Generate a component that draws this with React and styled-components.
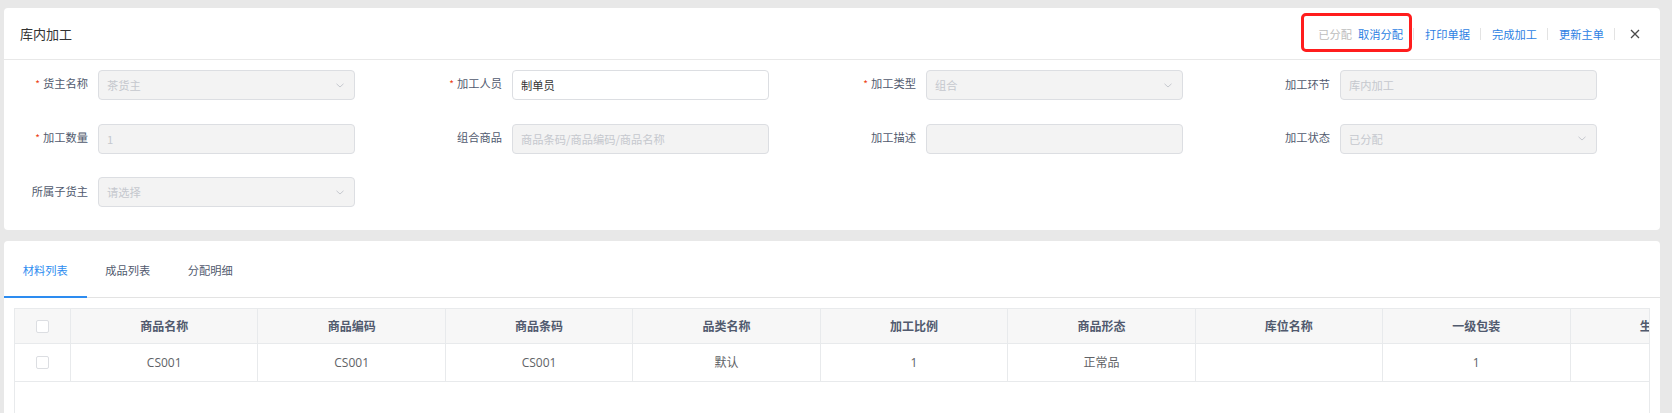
import React from "react";
import styled, { createGlobalStyle } from "styled-components";

const GlobalStyle = createGlobalStyle`
  html, body { margin: 0; padding: 0; background: #e8e8e8; }
  body { font-family: "Open Sans", "Noto Sans CJK SC", sans-serif; }
  * { box-sizing: border-box; }
`;

const Page = styled.div`
  height: 413px;
  overflow: hidden;
  padding: 8px 12px 0 4px;
  font-family: "Noto Sans CJK SC", "Open Sans", sans-serif;
`;

const Panel = styled.section`
  background: #fff;
  border-radius: 4px;
  margin-bottom: ${(p) => p.$gap || 0}px;
`;

const Header = styled.header`
  height: 52px;
  border-bottom: 1px solid #e8e8e8;
  display: flex;
  align-items: center;
  justify-content: space-between;
  padding: 0 20px 0 16px;
`;

const Title = styled.h1`
  margin: 0;
  font-size: 13px;
  font-weight: 400;
  color: #333;
  line-height: 18px;
`;

const Actions = styled.div`
  display: flex;
  align-items: center;
  padding-top: 1px;
`;

const Highlighted = styled.div`
  position: relative;
  display: flex;
  gap: 6px;
`;

const RedBox = styled.span`
  position: absolute;
  top: -13px;
  bottom: -10px;
  left: -17px;
  right: -9px;
  border: 3px solid #ff1d1d;
  border-radius: 5px;
  pointer-events: none;
`;

const ActionText = styled.span`
  font-size: 11.25px;
  line-height: 16px;
  color: ${(p) => (p.$muted ? "#bdbdbd" : "#2d7fe3")};
  cursor: ${(p) => (p.$muted ? "default" : "pointer")};
  white-space: nowrap;
`;

const Sep = styled.span`
  width: 1px;
  height: 12px;
  background: #e3e3e3;
  margin: 0 11px 0 10px;
`;

const CloseBtn = styled.span`
  display: flex;
  margin-left: 4px;
  cursor: pointer;
`;

const Form = styled.div`
  display: grid;
  grid-template-columns: repeat(4, 1fr);
  row-gap: 23.5px;
  padding: 10px 0 22.5px;
`;

const Field = styled.div`
  display: grid;
  grid-template-columns: 84px 257px;
  column-gap: 10px;
  align-items: center;
`;

const Label = styled.label`
  text-align: right;
  font-size: 11.25px;
  line-height: 16px;
  color: #515a6e;
  margin-top: -3px;
  white-space: nowrap;
`;

const Star = styled.span`
  color: #ed4014;
  margin-right: 3px;
  font-size: 10px;
`;

const InputBox = styled.div`
  height: 30px;
  border: 1px solid #dcdee2;
  border-radius: 4px;
  background: ${(p) => (p.$disabled ? "#f3f3f3" : "#fff")};
  color: ${(p) => (p.$disabled ? "#c5c8ce" : "#333")};
  padding: 0 10px 0 8px;
  display: flex;
  align-items: center;
  justify-content: space-between;
  font-size: 11.25px;
  white-space: nowrap;
`;

const TabBar = styled.nav`
  display: flex;
  height: 57px;
  border-bottom: 1px solid #e3e3e3;
`;

const Tab = styled.div`
  display: flex;
  align-items: center;
  padding: 3px 18.75px 0;
  height: 57px;
  margin-bottom: -1px;
  font-size: 11.25px;
  color: ${(p) => (p.$active ? "#2d8cf0" : "#515a6e")};
  border-bottom: 2px solid ${(p) => (p.$active ? "#2d8cf0" : "transparent")};
  cursor: pointer;
`;

const TableWrap = styled.div`
  margin: 10px 10px 0;
  height: 140px;
  border: 1px solid #e8eaec;
  overflow: hidden;
`;

const Table = styled.table`
  border-collapse: separate;
  border-spacing: 0;
  table-layout: fixed;
  width: 1743px;
  font-size: 12px;
`;

const Th = styled.th`
  height: 35px;
  background: #f7f7f7;
  color: #515a6e;
  font-weight: 700;
  text-align: center;
  border-right: 1px solid #e8eaec;
  border-bottom: 1px solid #e8eaec;
  padding: 0;
  white-space: nowrap;
  overflow: hidden;
`;

const Td = styled.td`
  height: 38px;
  color: #606266;
  text-align: center;
  border-right: 1px solid #e8eaec;
  border-bottom: 1px solid #e8eaec;
  padding: 0;
  font-family: "Open Sans", "Noto Sans CJK SC", sans-serif;
  white-space: nowrap;
`;

const Checkbox = styled.span`
  display: inline-block;
  width: 13px;
  height: 13px;
  border: 1px solid #dcdee2;
  border-radius: 2px;
  background: #fff;
  vertical-align: middle;
  margin-top: -2px;
`;

const Chevron = () => (
  <svg width="8" height="5" viewBox="0 0 8 5" fill="none">
    <path d="M0.5 0.8L4 4L7.5 0.8" stroke="#c5c8ce" strokeWidth="1" />
  </svg>
);

const fields = [
  { label: "货主名称", req: true, value: "茶货主", disabled: true, select: true },
  { label: "加工人员", req: true, value: "制单员" },
  { label: "加工类型", req: true, value: "组合", disabled: true, select: true },
  { label: "加工环节", value: "库内加工", disabled: true },
  { label: "加工数量", req: true, value: "1", disabled: true },
  { label: "组合商品", value: "商品条码/商品编码/商品名称", disabled: true },
  { label: "加工描述", value: "", disabled: true },
  { label: "加工状态", value: "已分配", disabled: true, select: true },
  { label: "所属子货主", value: "请选择", disabled: true, select: true },
];

const columns = ["商品名称", "商品编码", "商品条码", "品类名称", "加工比例", "商品形态", "库位名称", "一级包装", "生产日期"];
const rows = [["CS001", "CS001", "CS001", "默认", "1", "正常品", "", "1", ""]];

export default function App() {
  return (
    <>
      <GlobalStyle />
      <Page>
        <Panel $gap={11}>
          <Header>
            <Title>库内加工</Title>
            <Actions>
              <Highlighted>
                <ActionText $muted>已分配</ActionText>
                <ActionText>取消分配</ActionText>
                <RedBox />
              </Highlighted>
              <Sep />
              <ActionText>打印单据</ActionText>
              <Sep />
              <ActionText>完成加工</ActionText>
              <Sep />
              <ActionText>更新主单</ActionText>
              <Sep />
              <CloseBtn>
                <svg width="10" height="10" viewBox="0 0 10 10" fill="none">
                  <path d="M1 1L9 9M9 1L1 9" stroke="#4a4a4a" strokeWidth="1.3" />
                </svg>
              </CloseBtn>
            </Actions>
          </Header>
          <Form>
            {fields.map((f) => (
              <Field key={f.label}>
                <Label>
                  {f.req && <Star>*</Star>}
                  {f.label}
                </Label>
                <InputBox $disabled={f.disabled}>
                  <span>{f.value}</span>
                  {f.select && <Chevron />}
                </InputBox>
              </Field>
            ))}
          </Form>
        </Panel>
        <Panel>
          <TabBar>
            <Tab $active>材料列表</Tab>
            <Tab>成品列表</Tab>
            <Tab>分配明细</Tab>
          </TabBar>
          <TableWrap>
            <Table>
              <colgroup>
                <col style={{ width: 56 }} />
                {columns.map((c) => (
                  <col key={c} style={{ width: 187.4 }} />
                ))}
              </colgroup>
              <thead>
                <tr>
                  <Th>
                    <Checkbox />
                  </Th>
                  {columns.map((c) => (
                    <Th key={c}>{c}</Th>
                  ))}
                </tr>
              </thead>
              <tbody>
                {rows.map((r, i) => (
                  <tr key={i}>
                    <Td>
                      <Checkbox />
                    </Td>
                    {r.map((v, j) => (
                      <Td key={j}>{v}</Td>
                    ))}
                  </tr>
                ))}
              </tbody>
            </Table>
          </TableWrap>
        </Panel>
      </Page>
    </>
  );
}
